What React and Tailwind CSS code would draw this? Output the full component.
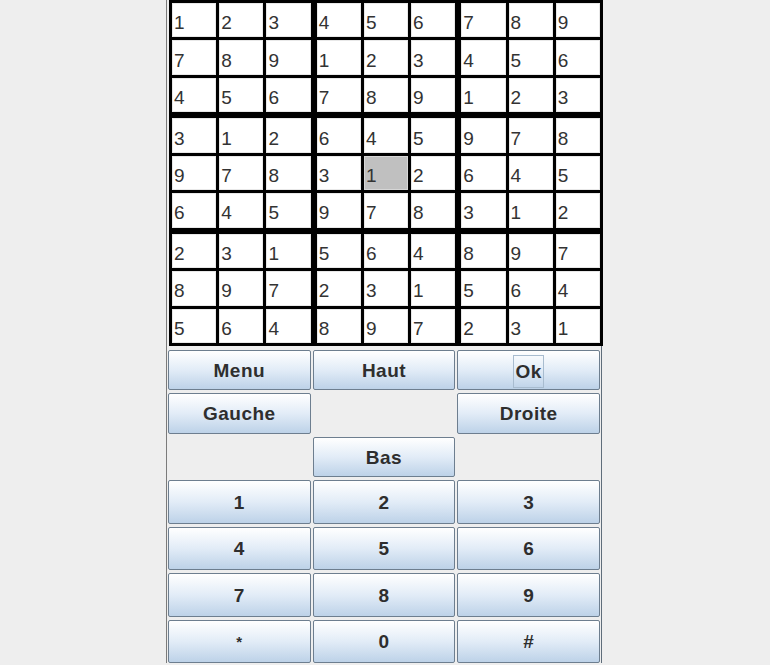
const GRID = [
  [1, 2, 3, 4, 5, 6, 7, 8, 9],
  [7, 8, 9, 1, 2, 3, 4, 5, 6],
  [4, 5, 6, 7, 8, 9, 1, 2, 3],
  [3, 1, 2, 6, 4, 5, 9, 7, 8],
  [9, 7, 8, 3, 1, 2, 6, 4, 5],
  [6, 4, 5, 9, 7, 8, 3, 1, 2],
  [2, 3, 1, 5, 6, 4, 8, 9, 7],
  [8, 9, 7, 2, 3, 1, 5, 6, 4],
  [5, 6, 4, 8, 9, 7, 2, 3, 1],
];

const SELECTED = [4, 4];

const NAV = ["Menu", "Haut", "Ok", "Gauche", null, "Droite", null, "Bas", null];
const KEYS = ["1", "2", "3", "4", "5", "6", "7", "8", "9", "*", "0", "#"];

function Cell({ value, selected }) {
  return (
    <div
      className={`flex items-center pl-[1px] pt-[5px] border text-[19px] leading-none text-[#333] ${
        selected ? "bg-[#c0c0c0] border-[#d6d6d6]" : "bg-white border-[#e8e8e8]"
      }`}
    >
      {value}
    </div>
  );
}

function Block({ br, bc }) {
  const cells = [];
  for (let r = 0; r < 3; r++) {
    for (let c = 0; c < 3; c++) {
      const row = br * 3 + r;
      const col = bc * 3 + c;
      cells.push(
        <Cell
          key={`${r}-${c}`}
          value={GRID[row][col]}
          selected={row === SELECTED[0] && col === SELECTED[1]}
        />
      );
    }
  }
  return <div className="grid grid-cols-3 grid-rows-3 gap-[3px]">{cells}</div>;
}

function Btn({ children, focused }) {
  return (
    <button className="flex items-center justify-center rounded-[2px] border border-[#6d7e8f] bg-linear-to-b from-white via-[#e2ecf7] to-[#bdd2e8] pt-[2px] font-bold text-[19px] tracking-[0.5px] text-[#2e2e2e]">
      {focused ? (
        <span className="border border-[#a8bccf] px-[1px] py-[6px] leading-none">{children}</span>
      ) : (
        children
      )}
    </button>
  );
}

export default function App() {
  return (
    <div className="min-h-screen bg-[#eeeeee]" style={{ fontFamily: '"Liberation Sans", Arial, sans-serif' }}>
      <div className="ml-[166px] w-[437px] border-l border-[#7b7b7b]">
        {/* Sudoku board */}
        <div className="ml-[2px] grid h-[346px] w-[434px] grid-cols-3 grid-rows-3 gap-[6px] bg-black p-[3px]">
          {[0, 1, 2].map((br) =>
            [0, 1, 2].map((bc) => <Block key={`${br}${bc}`} br={br} bc={bc} />)
          )}
        </div>

        {/* Controls */}
        <div className="w-[435px] border-r border-[#5f6d7a] pl-[1px] pt-[4px]">
          <div className="grid h-[127px] w-[432px] grid-cols-3 grid-rows-3 gap-[3px] gap-x-[2px]">
            {NAV.map((label, i) =>
              label ? (
                <Btn key={i} focused={label === "Ok"}>
                  {label}
                </Btn>
              ) : (
                <div key={i} className="bg-[#eeeeee]" />
              )
            )}
          </div>
          <div className="mt-[3px] grid h-[183px] w-[432px] grid-cols-3 grid-rows-4 gap-[3px] gap-x-[2px]">
            {KEYS.map((k) => (
              <Btn key={k}>{k === "*" ? <span className="text-[15px]">*</span> : k}</Btn>
            ))}
          </div>
        </div>
      </div>
    </div>
  );
}
